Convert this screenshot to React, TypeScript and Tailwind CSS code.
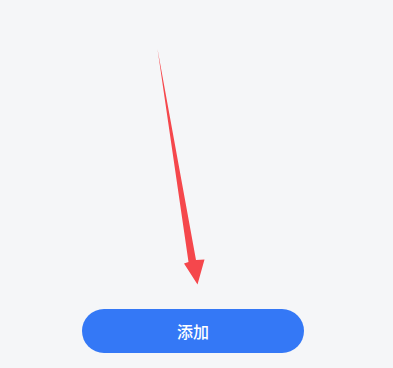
import React from "react";

export default function App() {
  return (
    <div
      className="relative flex h-[368px] w-[393px] flex-col justify-end overflow-hidden bg-[#f5f6f8] pb-[15px]"
      style={{ fontFamily: '"Noto Sans CJK SC", "Noto Sans", sans-serif' }}
    >
      <svg
        className="pointer-events-none absolute left-0 top-0"
        width="393"
        height="368"
        viewBox="0 0 393 368"
      >
        <polygon
          points="157.5,49 196,260 204.5,259.5 197.5,284.5 184,263.5 188.5,262"
          fill="#f5474c"
        />
      </svg>
      <button className="ml-[82px] flex h-[44px] w-[222px] items-center justify-center rounded-full bg-[#3478f6] text-[16px] font-medium text-white">
        添加
      </button>
    </div>
  );
}
